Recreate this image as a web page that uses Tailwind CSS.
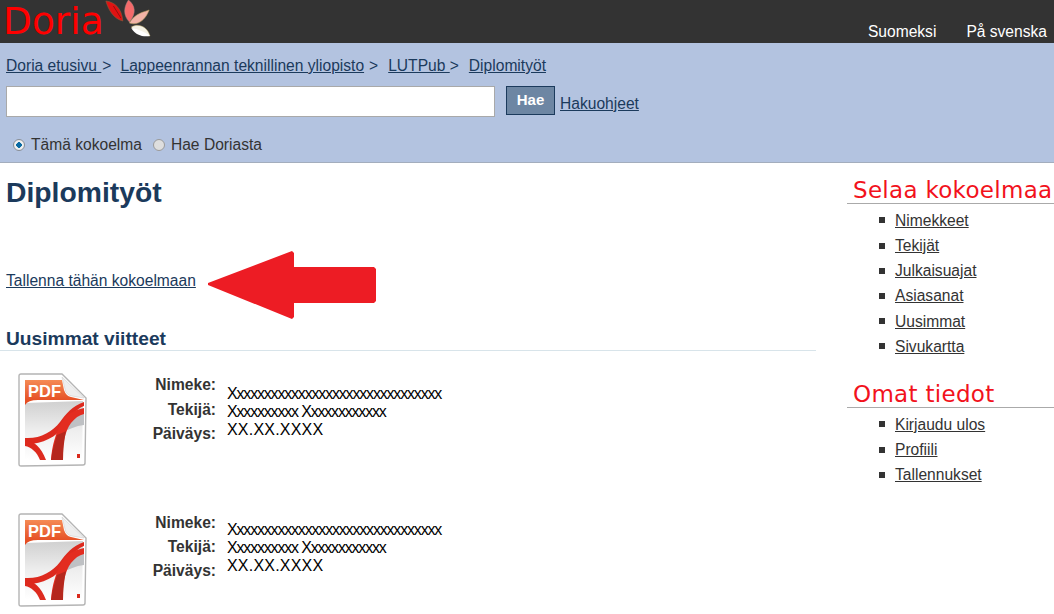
<!DOCTYPE html>
<html lang="en">
<head>
  <meta charset="UTF-8">
  <title>Diplomityöt - Doria</title>
  <script src="https://cdn.jsdelivr.net/npm/@tailwindcss/browser@4"></script>
</head>
<body class="bg-white h-[614px] w-[1054px] overflow-hidden font-['Liberation_Sans',Arial,sans-serif] text-[15.6px] text-[#333]">

  <!-- Top bar -->
  <div class="flex justify-between h-[43px] bg-[#333333]">
    <div class="flex items-start pl-[3px]">
      <span class="font-['DejaVu_Sans',sans-serif] text-[37.5px] leading-[43px] text-[#ff0000]">Doria</span>
      <svg width="47" height="38" viewBox="0 0 50 38" preserveAspectRatio="none">
        <path d="M2 1 C11 2 19 8 20 21 C11 19 5 11 2 1Z" fill="#e01212" stroke="#8a5a3a" stroke-width=".6"/>
        <path d="M10 6 L18 18" stroke="#7a1010" stroke-width=".8" fill="none"/>
        <path d="M26 0 C33 5 35 13 27 22 C20 15 21 7 26 0Z" fill="#f46a6a" stroke="#a88" stroke-width=".5"/>
        <path d="M48 10 C43 12 33 13 27 23 C36 26 44 20 48 10Z" fill="#f2b3a6" stroke="#b5a060" stroke-width=".6"/>
        <path d="M49 36 C44 35 36 36 29 27 C36 23 46 26 49 36Z" fill="#f4f1e4" stroke="#b5a060" stroke-width=".5"/>
        <path d="M29 28 C34 36 42 37 49 36 C44 32 36 29 29 28Z" fill="#ffffff"/>
      </svg>
    </div>
    <div class="flex gap-[30px] pr-[7px] pt-[23px] text-white leading-[18px]">
      <a href="#">Suomeksi</a>
      <a href="#">På svenska</a>
    </div>
  </div>

  <!-- Search band -->
  <div class="h-[120px] bg-[#b3c3e0] border-b border-[#a3adbd] pl-[6px] pt-[14px]">
    <div class="flex h-[18px] leading-[18px] text-[#1b3a5c]">
      <a href="#" class="underline whitespace-pre">Doria etusivu </a><span class="ml-[1px]">&gt;</span>
      <a href="#" class="underline ml-[9px]">Lappeenrannan teknillinen yliopisto</a><span class="ml-[5px]">&gt;</span>
      <a href="#" class="underline whitespace-pre ml-[10px]">LUTPub </a><span>&gt;</span>
      <a href="#" class="underline ml-[10px]">Diplomityöt</a>
    </div>
    <div class="flex items-start mt-[11px] h-[31px]">
      <input type="text" class="w-[489px] h-[31px] bg-white border border-[#a9a9a9]">
      <button class="ml-[11px] w-[49px] h-[29px] bg-[#6d86a3] border border-[#1b3a5c] text-white text-[15px] font-bold">Hae</button>
      <a href="#" class="ml-[5px] mt-[9px] leading-[18px] underline text-[#1b3a5c]">Hakuohjeet</a>
    </div>
    <div class="flex items-center mt-[19px] pl-[7px] h-[18px] leading-[18px] text-[#333]">
      <span class="w-[12px] h-[12px] rounded-full bg-[radial-gradient(circle,#0a6aa3_0,#0a6aa3_36%,#f4f4f4_42%,#dcdcdc_100%)] border border-[#8a8f96]"></span>
      <span class="ml-[6px]">Tämä kokoelma</span>
      <span class="ml-[11px] w-[12px] h-[12px] rounded-full bg-[#dedede] border border-[#9a9a9a]"></span>
      <span class="ml-[6px]">Hae Doriasta</span>
    </div>
  </div>

  <!-- Main -->
  <div class="flex">
    <div class="w-[816px] shrink-0 pl-[6px]">
      <h1 class="mt-[14px] h-[31px] text-[28.3px] leading-[31px] font-bold text-[#1b3a5c]">Diplomityöt</h1>

      <div class="relative mt-[62px] h-[22px] leading-[22px]">
        <a href="#" class="underline text-[#1b3a5c]">Tallenna tähän kokoelmaan</a>
        <svg width="172" height="72" viewBox="0 0 172 72" class="absolute left-[200px] top-[-20px]">
          <path d="M2 33 L86 1 L88 3 L88 17 L168 17 L170 19 L170 51 L168 53 L88 53 L88 67 L86 69 L2 35Z" fill="#ed1c24"/>
        </svg>
      </div>

      <div class="mt-[36px] border-b border-[#d8e4ea] -ml-[6px] pl-[6px]">
        <h2 class="text-[19.2px] leading-[22px] font-bold text-[#1b3a5c]">Uusimmat viitteet</h2>
      </div>

      <!-- Items -->
      <div class="flex h-[162px] pt-[22px]">
        <svg width="72" height="96" viewBox="0 0 72 96" class="ml-[12px] shrink-0">
          <use href="#pdf-icon"/>
        </svg>
        <div class="w-[126px] shrink-0 text-right font-bold leading-[22px] pt-[2px] text-[#333]">
          <div class="h-[24px] leading-[20px]">Nimeke:</div>
          <div class="h-[24px]">Tekijä:</div>
          <div>Päiväys:</div>
        </div>
        <div class="ml-[11px] pt-[12px] text-black text-[16px] leading-[18px]">
          <div class="tracking-[-1.18px]">Xxxxxxxxxxxxxxxxxxxxxxxxxxxxxxx</div>
          <div class="tracking-[-1.18px]">Xxxxxxxxxx Xxxxxxxxxxxx</div>
          <div class="tracking-[.2px]">XX.XX.XXXX</div>
        </div>
      </div>
      <div class="flex h-[96px]">
        <svg width="72" height="96" viewBox="0 0 72 96" class="ml-[12px] shrink-0">
          <use href="#pdf-icon"/>
        </svg>
        <div class="w-[126px] shrink-0 text-right font-bold leading-[22px] text-[#333]">
          <div class="h-[23px] leading-[20px]">Nimeke:</div>
          <div class="h-[24px]">Tekijä:</div>
          <div>Päiväys:</div>
        </div>
        <div class="ml-[11px] pt-[8px] text-black text-[16px] leading-[18px]">
          <div class="tracking-[-1.18px]">Xxxxxxxxxxxxxxxxxxxxxxxxxxxxxxx</div>
          <div class="tracking-[-1.18px]">Xxxxxxxxxx Xxxxxxxxxxxx</div>
          <div class="tracking-[.2px]">XX.XX.XXXX</div>
        </div>
      </div>
    </div>

    <!-- Sidebar -->
    <div class="ml-[31px] w-[207px] shrink-0 pt-[14px]">
      <h3 class="h-[27px] border-b border-[#aaaaaa] pl-[6px] font-['DejaVu_Sans',sans-serif] text-[23px] leading-[27px] tracking-[.3px] text-[#f2121c] whitespace-nowrap">Selaa kokoelmaa</h3>
      <ul class="pt-[3.8px] pl-[32px] leading-[25.2px]">
        <li class="flex items-center"><span class="w-[6px] h-[6px] bg-[#333] mr-[10px]"></span><a href="#" class="underline">Nimekkeet</a></li>
        <li class="flex items-center"><span class="w-[6px] h-[6px] bg-[#333] mr-[10px]"></span><a href="#" class="underline">Tekijät</a></li>
        <li class="flex items-center"><span class="w-[6px] h-[6px] bg-[#333] mr-[10px]"></span><a href="#" class="underline">Julkaisuajat</a></li>
        <li class="flex items-center"><span class="w-[6px] h-[6px] bg-[#333] mr-[10px]"></span><a href="#" class="underline">Asiasanat</a></li>
        <li class="flex items-center"><span class="w-[6px] h-[6px] bg-[#333] mr-[10px]"></span><a href="#" class="underline">Uusimmat</a></li>
        <li class="flex items-center"><span class="w-[6px] h-[6px] bg-[#333] mr-[10px]"></span><a href="#" class="underline">Sivukartta</a></li>
      </ul>
      <h3 class="mt-[22px] h-[27px] border-b border-[#aaaaaa] pl-[6px] font-['DejaVu_Sans',sans-serif] text-[23px] leading-[27px] tracking-[.3px] text-[#f2121c]">Omat tiedot</h3>
      <ul class="pt-[3.8px] pl-[32px] leading-[25.2px]">
        <li class="flex items-center"><span class="w-[6px] h-[6px] bg-[#333] mr-[10px]"></span><a href="#" class="underline">Kirjaudu ulos</a></li>
        <li class="flex items-center"><span class="w-[6px] h-[6px] bg-[#333] mr-[10px]"></span><a href="#" class="underline">Profiili</a></li>
        <li class="flex items-center"><span class="w-[6px] h-[6px] bg-[#333] mr-[10px]"></span><a href="#" class="underline">Tallennukset</a></li>
      </ul>
    </div>
  </div>

  <!-- PDF icon definition -->
  <svg width="0" height="0" class="absolute">
    <defs>
      <linearGradient id="pdf-tab" x1="0" y1="0" x2="0" y2="1">
        <stop offset="0" stop-color="#f58a55"/>
        <stop offset="1" stop-color="#e2431a"/>
      </linearGradient>
      <linearGradient id="pdf-sheet" x1="0" y1="0" x2="0" y2="1">
        <stop offset="0" stop-color="#d0d0d0"/>
        <stop offset=".5" stop-color="#eeeeee"/>
        <stop offset="1" stop-color="#ffffff"/>
      </linearGradient>
      <g id="pdf-icon">
        <path d="M1 3 Q1 1 3 1 L44 1 L68 25 L67 90 Q67 92 65 92 L3 93 Q1 93 1 91Z" fill="#fff" stroke="#b4b4b4" stroke-width="1.4"/>
        <path d="M7 30 L65 28 L64 87 L7 87Z" fill="url(#pdf-sheet)"/>
        <path d="M50 43 C55 42 60 40 66 36 L66 52 C58 53 50 56 44 60 C45 54 47 48 50 43Z" fill="#bfc1c4"/>
        <path d="M7 7 L44 7 L46 17 Q48 23 53 24 L66 27 L20 27 Q10 27 7 32Z" fill="url(#pdf-tab)"/>
        <path d="M44 4 L66 25 L54 23 Q48 22 47 16Z" fill="#eeeeee" stroke="#d0d0d0" stroke-width=".6"/>
        <text x="10" y="24" font-family="Liberation Sans, sans-serif" font-weight="700" font-size="16.5" fill="#fff">PDF</text>
        <path d="M7 65 C22 66 34 59 42 49 C48 41 54 33 66 29 L66 33 C58 36 53 43 47 52 C38 65 22 72 7 71Z" fill="#dd2a1e"/>
        <path d="M66 35 C56 37 47 42 43 50 C38 60 34 72 33 87 L45 87 C44 72 47 58 53 50 C57 45 61 42 66 41Z" fill="#e32d20"/>
        <path d="M7 67 C16 68 23 74 28 87 L22 87 C19 79 13 74 7 73Z" fill="#dd2a1e"/>
        <path d="M39 62 C42 61 46 59 48 58 C46 67 45 78 45 87 L33 87 C34 78 37 69 39 62Z" fill="#b5281d"/>
        <rect x="59" y="81" width="3" height="4" fill="#d9291c"/>
      </g>
    </defs>
  </svg>
</body>
</html>
